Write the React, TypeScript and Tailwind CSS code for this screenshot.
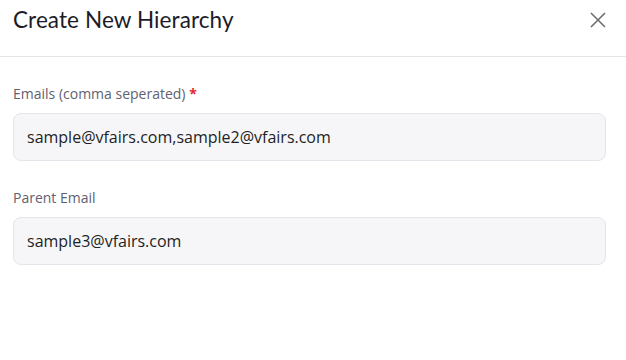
import React, { useState } from 'react';

export default function App() {
    const [emails, setEmails] = useState('sample@vfairs.com,sample2@vfairs.com');
    const [parentEmail, setParentEmail] = useState('sample3@vfairs.com');

    return (
        <div className="w-[626px] h-[360px] bg-white font-['Open_Sans',sans-serif]">
            <div className="flex items-center justify-between h-[57px] pl-[13px] pr-[18px] pb-[17px] border-b border-[#e3e3e8]">
                <h1 className="font-['Lato',sans-serif] text-[22.5px] leading-[40px] text-[#1c1c28] font-normal tracking-[0.1px]">Create New Hierarchy</h1>
                <button className="text-[#6e6e73]">
                    <svg width="20" height="20" viewBox="0 0 20 20" fill="none" stroke="currentColor" strokeWidth="1.6">
                        <path d="M3 3L17 17M17 3L3 17" />
                    </svg>
                </button>
            </div>

            <div className="pl-[13px] pr-[20px] pt-[27px] flex flex-col gap-[27px]">
                <div className="flex flex-col gap-[9px]">
                    <label className="text-[14px] leading-[20px] text-[#5f6170]">
                        Emails (comma seperated) <span className="text-[#e5262b] font-bold">*</span>
                    </label>
                    <input
                        type="text"
                        value={emails}
                        onChange={(e) => setEmails(e.target.value)}
                        className="h-[48px] w-full px-[13px] rounded-[8px] border border-[#e4e4ea] bg-[#f6f6f8] text-[16px] text-[#1e1e24] outline-none"
                    />
                </div>
                <div className="flex flex-col gap-[9px]">
                    <label className="text-[14px] leading-[20px] text-[#5f6170]">Parent Email</label>
                    <input
                        type="text"
                        value={parentEmail}
                        onChange={(e) => setParentEmail(e.target.value)}
                        className="h-[48px] w-full px-[13px] rounded-[8px] border border-[#e4e4ea] bg-[#f6f6f8] text-[16px] text-[#1e1e24] outline-none"
                    />
                </div>
            </div>
        </div>
    );
}
